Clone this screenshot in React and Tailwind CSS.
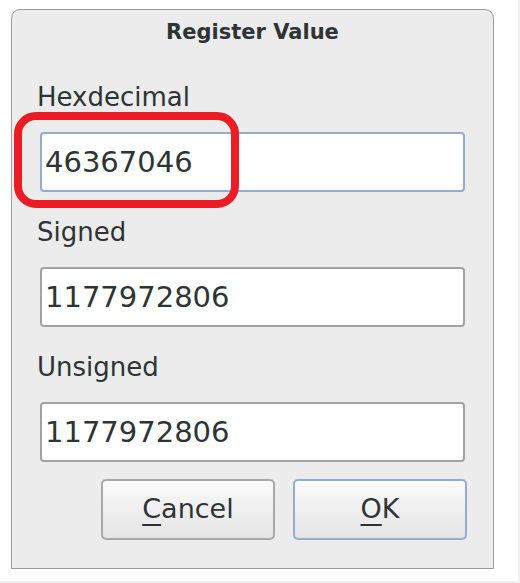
import { useState } from "react";

const font = { fontFamily: '"DejaVu Sans", "Open Sans", sans-serif' };

function Field({ label, value, focused, onChange, className = "" }) {
  return (
    <div className={"flex flex-col " + className}>
      <label className="-ml-[3px] mb-[22px] text-[26px] leading-none text-[#2e3436]">{label}</label>
      <input
        value={value}
        onChange={(e) => onChange(e.target.value)}
        className={
          "h-[60px] w-full rounded-[4px] border-2 bg-white px-[3px] text-[29px] text-[#2e3436] outline-none " +
          (focused ? "border-[#93add0]" : "border-[#a2a2a2]")
        }
        style={font}
      />
    </div>
  );
}

function Button({ children, primary }) {
  return (
    <button
      className={
        "flex h-[61px] w-[174px] items-center justify-center rounded-[5px] border-2 bg-gradient-to-b from-[#fbfbfb] to-[#e4e4e4] text-[27px] text-[#2e3436] " +
        (primary ? "border-[#93add0]" : "border-[#a8a8a8]")
      }
      style={font}
    >
      {children}
    </button>
  );
}

export default function App() {
  const [hex, setHex] = useState("46367046");
  const [signed, setSigned] = useState("1177972806");
  const [unsigned, setUnsigned] = useState("1177972806");

  return (
    <div
      className="h-[583px] w-[520px] overflow-hidden border-r-2 border-b-2 border-[#efefef] bg-white pl-[11px] pt-[9px]"
      style={font}
    >
      <div className="relative flex h-[560px] w-[483px] flex-col rounded-t-[9px] border border-[#9c9c9c] bg-[#ececec] px-[28px]">
        <h1 className="pt-[12px] text-center text-[21px] font-bold leading-none text-[#2e3436]">Register Value</h1>

        <Field label="Hexdecimal" value={hex} onChange={setHex} focused className="mt-[41px]" />
        <Field label="Signed" value={signed} onChange={setSigned} className="mt-[27px]" />
        <Field label="Unsigned" value={unsigned} onChange={setUnsigned} className="mt-[27px]" />

        <div className="mt-[17px] -mr-[2px] flex justify-end gap-[18px]">
          <Button>
            <span className="underline decoration-2 underline-offset-[6px]">C</span>ancel
          </Button>
          <Button primary>
            <span className="underline decoration-2 underline-offset-[6px]">O</span>K
          </Button>
        </div>

        {/* red marker around the hex value */}
        <div className="pointer-events-none absolute left-[2px] top-[102px] h-[96px] w-[225px] rounded-[22px] border-[8px] border-[#ec1c24]" />
      </div>
    </div>
  );
}
